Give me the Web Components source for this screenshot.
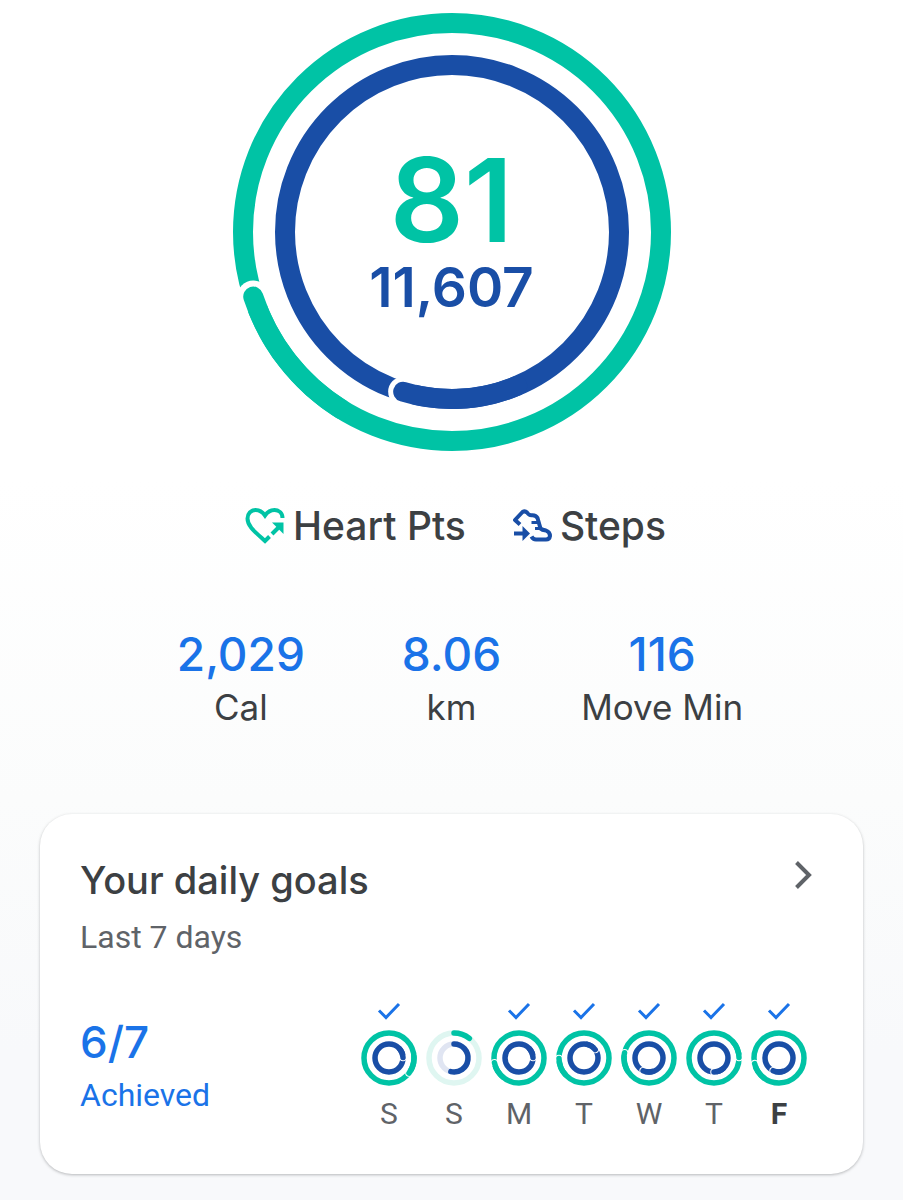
<!DOCTYPE html>
<html lang="en">
<head>
<meta charset="utf-8">
<meta name="viewport" content="width=device-width, initial-scale=1">
<title>Activity</title>
<style>
html {
  min-height: 100%;
  background: linear-gradient(#ffffff 0, #ffffff 480px, #fbfcfc 800px, #f8f9fb 1050px);
}
body {
  margin: 0;
  color: #3c4043;
  font-family: Inter, "Liberation Sans", sans-serif;
}
</style>
</head>
<body>
<fit-home></fit-home>

<script>
const GREEN = "#00c3a5";
const BLUE = "#194ea6";

/**
 * Two concentric progress rings, with optional content in the middle.
 *
 * @tagname fit-rings
 *
 * @attribute {number} outer - Where the heart points ring ends, in degrees
 * @attribute {number} inner - Where the steps ring ends, in degrees
 * @attribute {boolean} mini - Proportions for the small rings of a week
 * @attribute {boolean} partial - The goal was not reached: shows the track
 */
class FitRings extends HTMLElement {
  constructor() {
    super();
    this.attachShadow({ mode: "open" });
  }

  connectedCallback() {
    const mini = this.hasAttribute("mini");
    const size = mini ? 56 : 440;
    const outer = mini
      ? { r: 25, width: 5.5, halo: 1 }
      : { r: 209, width: 20, halo: 6 };
    const inner = mini
      ? { r: 14, width: 5.5, halo: 1 }
      : { r: 167, width: 20, halo: 5 };

    this.shadowRoot.innerHTML = `
      <style>
        :host {
          display: grid;
          justify-items: center;
          align-items: center;
        }
        svg, .content {
          grid-area: 1 / 1;
        }
        svg {
          display: block;
          width: ${size}px;
          max-width: 100%;
        }
        .content {
          text-align: center;
        }
      </style>
      <svg viewBox="${-size / 2} ${-size / 2} ${size} ${size}" fill="none" aria-hidden="true">
        ${this.#ring(outer, Number(this.getAttribute("outer")), GREEN, "#dff6f1")}
        ${this.#ring(inner, Number(this.getAttribute("inner")), BLUE, "#e0e5f2")}
      </svg>
      <div class="content"><slot></slot></div>
    `;
  }

  #point(r, degrees) {
    const angle = (degrees * Math.PI) / 180;
    return [r * Math.sin(angle), -r * Math.cos(angle)];
  }

  #arc(r, from, to) {
    const [x1, y1] = this.#point(r, from);
    const [x2, y2] = this.#point(r, to);
    return `M${x1} ${y1}A${r} ${r} 0 ${to - from > 180 ? 1 : 0} 1 ${x2} ${y2}`;
  }

  #ring({ r, width, halo }, end, color, track) {
    if (this.hasAttribute("partial")) {
      return `
        <circle r="${r}" stroke="${track}" stroke-width="${width}"/>
        <path d="${this.#arc(r, 0, end)}" stroke="${color}" stroke-width="${width}" stroke-linecap="round"/>
      `;
    }
    // The halo separates the head of the ring from the lap below it
    const [x, y] = this.#point(r, end);
    return `
      <circle r="${r}" stroke="${color}" stroke-width="${width}"/>
      <circle cx="${x}" cy="${y}" r="${width / 2 + halo}" fill="#fff"/>
      <path d="${this.#arc(r, end - 40, end)}" stroke="${color}" stroke-width="${width}" stroke-linecap="round"/>
    `;
  }
}

const statTemplate = document.createElement("template");
statTemplate.innerHTML = `
<style>
:host {
  display: block;
  text-align: center;
}
.value {
  color: #1a73e8;
  font-size: 46px;
  font-weight: 500;
  line-height: 56px;
}
.label {
  font-size: 35px;
  line-height: 50px;
}
</style>
<div class="value"><slot name="value"></slot></div>
<div class="label"><slot></slot></div>
`;

/** A number with its unit below. */
class FitStat extends HTMLElement {
  constructor() {
    super();
    this.attachShadow({ mode: "open" });
    this.shadowRoot.appendChild(statTemplate.content.cloneNode(true));
  }
}

const legendTemplate = document.createElement("template");
legendTemplate.innerHTML = `
<style>
:host {
  display: flex;
  align-items: center;
  gap: 8px;
  font-size: 39px;
  font-weight: 500;
  line-height: 48px;
}
::slotted(svg) {
  display: block;
  width: 40px;
  height: 40px;
}
</style>
<slot name="icon"></slot>
<span><slot></slot></span>
`;

/** An icon and the name of a ring. */
class FitLegend extends HTMLElement {
  constructor() {
    super();
    this.attachShadow({ mode: "open" });
    this.shadowRoot.appendChild(legendTemplate.content.cloneNode(true));
  }
}

/**
 * One day of the week.
 *
 * @tagname fit-day
 *
 * @attribute {string} name - Letter of the day
 * @attribute {boolean} done - Whether the goal was reached
 * @attribute {boolean} today
 */
class FitDay extends HTMLElement {
  constructor() {
    super();
    this.attachShadow({ mode: "open" });
  }

  connectedCallback() {
    const done = this.hasAttribute("done");
    this.shadowRoot.innerHTML = `
      <style>
        :host {
          display: flex;
          flex-direction: column;
          align-items: center;
          color: #5f6368;
          font-family: Roboto, sans-serif;
        }
        :host([today]) {
          color: #3c4043;
          font-weight: 700;
        }
        .check {
          display: block;
          width: 24px;
          height: 20px;
          margin-bottom: 10px;
        }
        .name {
          margin-top: 8px;
          font-size: 30px;
          line-height: 40px;
        }
      </style>
      <svg class="check" viewBox="0 0 24 20" fill="none" stroke="#1a73e8" stroke-width="3" aria-hidden="true">
        ${done ? '<path d="M2 10.500L9 17.500L22 4"/>' : ""}
      </svg>
      <fit-rings mini ${done ? "" : "partial"}
        outer="${this.getAttribute("outer")}"
        inner="${this.getAttribute("inner")}"></fit-rings>
      <span class="name">${this.getAttribute("name")}</span>
    `;
  }
}

const goalsTemplate = document.createElement("template");
goalsTemplate.innerHTML = `
<style>
:host {
  display: block;
  border-radius: 32px;
  background: #fff;
  box-shadow: 0 1px 3px rgba(60, 64, 67, 0.35);
  padding: 40px;
}
header {
  display: flex;
  justify-content: space-between;
  align-items: flex-start;
}
h2 {
  margin: 0;
  font-size: 38px;
  font-weight: 500;
  line-height: 52px;
}
.period {
  margin: 8px 0 0;
  color: #5f6368;
  font-family: Roboto, sans-serif;
  font-size: 32px;
  line-height: 46px;
}
button {
  border: 0;
  background: none;
  padding: 0;
  cursor: pointer;
}
button svg {
  display: block;
  width: 40px;
  height: 40px;
}
.week {
  display: flex;
  justify-content: space-between;
  align-items: center;
  margin-top: 40px;
  padding-right: 16px;
}
.score {
  color: #1a73e8;
}
.count {
  font-size: 44px;
  font-weight: 500;
  line-height: 56px;
}
.achieved {
  font-family: Roboto, sans-serif;
  font-size: 32px;
  line-height: 50px;
}
.days {
  display: flex;
  gap: 9px;
}
</style>
<header>
  <div>
    <h2>Your daily goals</h2>
    <p class="period">Last 7 days</p>
  </div>
  <button type="button" aria-label="Open daily goals">
    <svg viewBox="0 0 40 40" fill="none" stroke="#5f6368" stroke-width="4"><path d="M13.500 8.500L26 21L13.500 33.500"/></svg>
  </button>
</header>
<div class="week">
  <div class="score">
    <div class="count">6/7</div>
    <div class="achieved">Achieved</div>
  </div>
  <div class="days">
    <fit-day name="S" outer="127" inner="88" done></fit-day>
    <fit-day name="S" outer="38" inner="193"></fit-day>
    <fit-day name="M" outer="259" inner="88" done></fit-day>
    <fit-day name="T" outer="269" inner="53" done></fit-day>
    <fit-day name="W" outer="282" inner="205" done></fit-day>
    <fit-day name="T" outer="89" inner="180" done></fit-day>
    <fit-day name="F" outer="257" inner="205" done today></fit-day>
  </div>
</div>
`;

/** The card with the goals of the last seven days. */
class FitGoals extends HTMLElement {
  constructor() {
    super();
    this.attachShadow({ mode: "open" });
    this.shadowRoot.appendChild(goalsTemplate.content.cloneNode(true));
  }
}

const homeTemplate = document.createElement("template");
homeTemplate.innerHTML = `
<style>
:host {
  display: block;
  padding: 12px 40px 26px;
}
.points {
  color: ${GREEN};
  font-size: 116px;
  font-weight: 600;
  line-height: 110px;
}
.steps {
  color: ${BLUE};
  font-size: 55px;
  font-weight: 600;
  line-height: 64px;
}
.legends {
  display: flex;
  justify-content: center;
  gap: 46px;
  margin-top: 50px;
  padding-left: 8px;
}
.stats {
  display: grid;
  grid-template-columns: repeat(3, 1fr);
  max-width: 632px;
  margin: 76px auto 0;
}
fit-stat {
  white-space: nowrap;
}
fit-goals {
  margin-top: 82px;
}
</style>
<fit-rings outer="252" inner="197">
  <div class="points">81</div>
  <div class="steps">11,607</div>
</fit-rings>
<div class="legends">
  <fit-legend>
    <svg slot="icon" viewBox="0 0 40 40" fill="none" stroke="${GREEN}" stroke-width="4" aria-hidden="true">
      <path d="M37.500 12C37.500 7 34 4 29.500 4C25.500 4 22.500 6 20 9.500C17.500 6 14.500 4 10.500 4C6 4 2.500 7.500 2.500 12.500C2.500 20 9 25 20 35L24.500 30.500"/>
      <path d="M27 28L35 20"/>
      <path d="M27 16.500H38.500V28Z" fill="${GREEN}" stroke="none"/>
    </svg>
    Heart Pts
  </fit-legend>
  <fit-legend>
    <svg slot="icon" viewBox="0 0 40 40" fill="none" stroke="${BLUE}" stroke-width="4" aria-hidden="true">
      <path d="M8 18.500L3 14L10.500 6Q13 4.500 15 6.500Q17 9.500 20 9.200Q24 9 25.500 12L28.500 22.500Q30 24 34 24.500Q38 26 38 30Q37.500 33.500 34 33.500H24Q21 33.500 19.500 30.500" stroke-linejoin="round"/>
      <path d="M19.500 16.500H26.500M23 22.500H29" stroke-width="3"/>
      <path d="M2 27.500H12"/>
      <path d="M10.500 20L18 27.500L10.500 35Z" fill="${BLUE}" stroke="none"/>
    </svg>
    Steps
  </fit-legend>
</div>
<div class="stats">
  <fit-stat><span slot="value">2,029</span>Cal</fit-stat>
  <fit-stat><span slot="value">8.06</span>km</fit-stat>
  <fit-stat><span slot="value">116</span>Move Min</fit-stat>
</div>
<fit-goals></fit-goals>
`;

class FitHome extends HTMLElement {
  constructor() {
    super();
    this.attachShadow({ mode: "open" });
    this.shadowRoot.appendChild(homeTemplate.content.cloneNode(true));
  }
}

customElements.define("fit-rings", FitRings);
customElements.define("fit-stat", FitStat);
customElements.define("fit-legend", FitLegend);
customElements.define("fit-day", FitDay);
customElements.define("fit-goals", FitGoals);
customElements.define("fit-home", FitHome);
</script>
</body>
</html>
